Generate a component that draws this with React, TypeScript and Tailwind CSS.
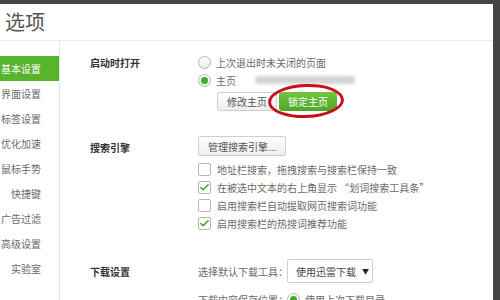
import { Check } from 'lucide-react';

const font = { fontFamily: '"Noto Sans CJK SC", "Noto Sans", sans-serif' };

const menu = ['基本设置', '界面设置', '标签设置', '优化加速', '鼠标手势', '快捷键', '广告过滤', '高级设置', '实验室'];

function Radio({ checked }: { checked?: boolean }) {
  return (
    <span className="w-[13px] h-[13px] rounded-full border border-[#b5b5b5] bg-gradient-to-b from-white to-[#ececec] flex items-center justify-center shrink-0">
      {checked && <span className="w-[7px] h-[7px] rounded-full bg-[#3fae2a]" />}
    </span>
  );
}

function Box({ checked }: { checked?: boolean }) {
  return (
    <span className="w-[13px] h-[13px] rounded-[2px] border border-[#b5b5b5] bg-white flex items-center justify-center shrink-0">
      {checked && <Check size={11} strokeWidth={3} className="text-[#3a9d23]" />}
    </span>
  );
}

const checks = [
  { text: '地址栏搜索，拖拽搜索与搜索栏保持一致', on: false },
  { text: '在被选中文本的右上角显示 “划词搜索工具条”', on: true },
  { text: '启用搜索栏自动提取网页搜索词功能', on: false },
  { text: '启用搜索栏的热搜词推荐功能', on: true },
];

export default function App() {
  return (
    <div className="w-[500px] h-[300px] bg-[#454545] pt-[4px] pr-[7px] overflow-hidden text-[10px] text-[#6a6a6a] whitespace-nowrap" style={font}>
      <div className="bg-white h-[296px] flex flex-col">
        <div className="h-[37px] border-b border-[#ececec] pl-[5px] flex items-center shrink-0">
          <span className="text-[20px] text-[#555] leading-none">选项</span>
        </div>
        <div className="flex flex-1">
          <div className="w-[60px] border-r border-[#e4e4e4] pt-[15px] shrink-0">
            {menu.map((m, i) => (
              <div
                key={m}
                className={`h-[25px] flex items-center justify-end pr-[18px] ${i === 0 ? 'bg-[#58b42c] text-white' : ''}`}
              >
                {m}
              </div>
            ))}
          </div>
          <div className="flex-1 pl-[30px]">
            {/* startup */}
            <div className="grid grid-cols-[108px_1fr] pt-[12px]">
              <div className="h-[18px] flex items-center font-bold text-[#333]">启动时打开</div>
              <div>
                <div className="h-[18px] flex items-center gap-[5px]">
                  <Radio />
                  <span>上次退出时未关闭的页面</span>
                </div>
                <div className="h-[18px] flex items-center gap-[5px]">
                  <Radio checked />
                  <span>主页</span>
                  <span className="ml-[14px] w-[100px] h-[8px] rounded-[3px] bg-[#d4d4d4] blur-[1.5px]" />
                </div>
                <div className="relative flex mt-[3px] ml-[19px] gap-[2px]">
                  <button className="h-[19px] px-[9px] border border-[#cfcfcf] rounded-[2px] bg-gradient-to-b from-white to-[#eee] text-[#555]">修改主页</button>
                  <button className="h-[19px] px-[9px] rounded-[3px] bg-gradient-to-b from-[#74c640] to-[#4ea528] text-white">锁定主页</button>
                  <span className="absolute left-[51px] top-[-8px] w-[76px] h-[34px] rounded-[50%] border-[3px] border-[#c8101a] rotate-[-2deg]" />
                </div>
              </div>
            </div>

            {/* search */}
            <div className="grid grid-cols-[108px_1fr] mt-[25px]">
              <div className="h-[20px] flex items-center font-bold text-[#333] pt-[3px]">搜索引擎</div>
              <div>
                <button className="h-[20px] px-[9px] border border-[#cfcfcf] rounded-[2px] bg-gradient-to-b from-white to-[#eee] text-[#555]">管理搜索引擎...</button>
                <div className="mt-[4px]">
                  {checks.map((c) => (
                    <div key={c.text} className="h-[18px] flex items-center gap-[6px]">
                      <Box checked={c.on} />
                      <span>{c.text}</span>
                    </div>
                  ))}
                </div>
              </div>
            </div>

            {/* download */}
            <div className="grid grid-cols-[108px_1fr] mt-[27px]">
              <div className="h-[24px] flex items-center font-bold text-[#333]">下载设置</div>
              <div>
                <div className="flex items-center">
                  <span className="w-[89px] shrink-0">选择默认下载工具：</span>
                  <div className="w-[86px] h-[24px] border border-[#cfcfcf] rounded-[2px] flex items-center gap-[6px] pl-[8px] text-[#444] shrink-0">
                    <span>使用迅雷下载</span>
                    <span className="text-[7px] text-[#222]">▼</span>
                  </div>
                </div>
                <div className="flex items-center h-[18px] mt-[7px]">
                  <span className="w-[89px] shrink-0">下载内容保存位置：</span>
                  <Radio checked />
                  <span className="ml-[5px]">使用上次下载目录</span>
                </div>
              </div>
            </div>
          </div>
        </div>
      </div>
    </div>
  );
}
